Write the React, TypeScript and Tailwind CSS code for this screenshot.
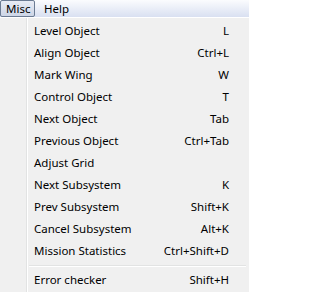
const items: [string, string][] = [
  ['Level Object', 'L'],
  ['Align Object', 'Ctrl+L'],
  ['Mark Wing', 'W'],
  ['Control Object', 'T'],
  ['Next Object', 'Tab'],
  ['Previous Object', 'Ctrl+Tab'],
  ['Adjust Grid', ''],
  ['Next Subsystem', 'K'],
  ['Prev Subsystem', 'Shift+K'],
  ['Cancel Subsystem', 'Alt+K'],
  ['Mission Statistics', 'Ctrl+Shift+D'],
];

const Row = ({ label, shortcut }: { label: string; shortcut: string }) => (
  <div className="flex h-[22px] items-center justify-between pl-[6px] pr-[20px]">
    <span>{label}</span>
    <span>{shortcut}</span>
  </div>
);

const App = () => {
  return (
    <div className="w-[249px] h-[292px] overflow-hidden bg-[#f0f0f0] text-[11.5px] text-black font-['Noto_Sans',sans-serif] leading-none">
      <div className="flex h-[18px] items-start bg-gradient-to-b from-[#fbfcfe] to-[#d9e0f1] border-b border-white">
        <div className="h-[17px] w-[35px] flex items-center pl-[5px] rounded-[2px] border border-[#6b7b93] bg-gradient-to-b from-[#e8ecf5] to-[#cdd5e6]">
          Misc
        </div>
        <div className="h-[17px] flex items-center pl-[9px]">Help</div>
      </div>
      <div className="flex h-[274px]">
        <div className="w-[27px] shrink-0 border-r border-[#e2e3e3]" />
        <div className="w-px bg-white" />
        <div className="flex-1 flex flex-col pt-[2px]">
          {items.map(([label, shortcut]) => (
            <Row key={label} label={label} shortcut={shortcut} />
          ))}
          <div className="h-[7px] flex flex-col justify-center pl-[1px] pr-[3px]">
            <div className="h-px bg-[#e2e3e3]" />
            <div className="h-px bg-white" />
          </div>
          <Row label="Error checker" shortcut="Shift+H" />
        </div>
      </div>
    </div>
  );
};

export default App;
